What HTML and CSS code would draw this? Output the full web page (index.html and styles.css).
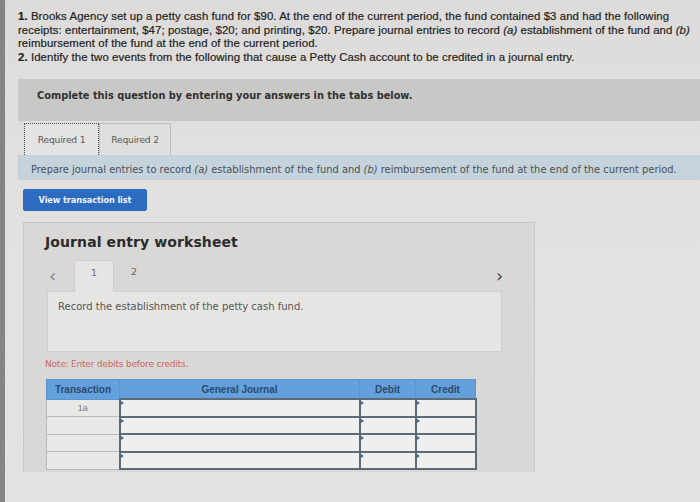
FILE: index.html
```html
<!DOCTYPE html>
<html lang="en">
<head>
<meta charset="utf-8">
<title>Petty cash fund</title>
<link rel="stylesheet" href="styles.css">
</head>
<body>
<div class="screen">
  <section class="question">
    <p><b>1.</b> Brooks Agency set up a petty cash fund for $90. At the end of the current period, the fund contained $3 and had the following<br>receipts: entertainment, $47; postage, $20; and printing, $20. Prepare journal entries to record <i>(a)</i> establishment of the fund and <i>(b)</i><br>reimbursement of the fund at the end of the current period.<br><b>2.</b> Identify the two events from the following that cause a Petty Cash account to be credited in a journal entry.</p>
  </section>

  <div class="instructions">Complete this question by entering your answers in the tabs below.</div>

  <div class="req-tabs">
    <div class="req-tab active">Required 1</div>
    <div class="req-tab">Required 2</div>
  </div>

  <div class="prompt">Prepare journal entries to record <i>(a)</i> establishment of the fund and <i>(b)</i> reimbursement of the fund at the end of the current period.</div>

  <button class="view-btn" type="button">View transaction list</button>

  <section class="worksheet">
    <h2>Journal entry worksheet</h2>
    <div class="ws-nav">
      <span class="arrow prev">&lsaquo;</span>
      <span class="ws-tab active">1</span>
      <span class="ws-tab">2</span>
      <span class="arrow next">&rsaquo;</span>
    </div>
    <div class="ws-body">Record the establishment of the petty cash fund.</div>
    <p class="note">Note: Enter debits before credits.</p>
    <table class="journal">
      <thead>
        <tr><th class="c-tr">Transaction</th><th class="c-gj">General Journal</th><th class="c-dr">Debit</th><th class="c-cr">Credit</th></tr>
      </thead>
      <tbody>
        <tr><td class="tr">1a</td><td class="in"></td><td class="in"></td><td class="in"></td></tr>
        <tr><td class="tr"></td><td class="in"></td><td class="in"></td><td class="in"></td></tr>
        <tr><td class="tr"></td><td class="in"></td><td class="in"></td><td class="in"></td></tr>
        <tr><td class="tr"></td><td class="in"></td><td class="in"></td><td class="in"></td></tr>
      </tbody>
    </table>
  </section>
</div>
</body>
</html>
```
FILE: styles.css
```css
html, body {
  margin: 0;
  padding: 0;
}

body {
  width: 700px;
  height: 502px;
  overflow: hidden;
  background: #e2e1df;
  font-family: "Liberation Sans", Arial, sans-serif;
  color: #2a2a2a;
}

.screen {
  height: 502px;
  box-sizing: border-box;
  border-left: 5px solid #858483;
  padding-left: 13px;
  background: linear-gradient(#dcdbd9 0, #dfdedc 80px, #e2e1df 200px, #e4e3e1 502px);
}

/* question text */
.question {
  height: 79px;
  box-sizing: border-box;
  padding-top: 10px;
}

.question p {
  margin: 0;
  font-size: 11.4px;
  line-height: 13.6px;
  color: #232323;
  white-space: nowrap;
  letter-spacing: 0.08px;
  -webkit-text-stroke: 0.2px #232323;
}

/* grey instruction band */
.instructions {
  height: 42px;
  box-sizing: border-box;
  background: #c8c8c7;
  padding: 11px 0 0 19px;
  font-family: "DejaVu Sans", Verdana, sans-serif;
  font-weight: bold;
  font-size: 9.8px;
  line-height: 12px;
  color: #303030;
}

/* Required tabs */
.req-tabs {
  display: flex;
  padding: 2px 0 0 6px;
  height: 34px;
  box-sizing: border-box;
}

.req-tab {
  width: 72px;
  box-sizing: border-box;
  border: 1px solid #bdbdbc;
  border-bottom: none;
  background: #dfdfde;
  font-family: "DejaVu Sans", Verdana, sans-serif;
  font-size: 9.2px;
  color: #5a5a5a;
  text-align: center;
  padding-top: 10px;
  line-height: 12px;
  letter-spacing: -0.2px;
}

.req-tab.active {
  width: 75px;
  border: 1px dotted #4d4d4d;
  border-bottom: none;
  background: #e3e3e2;
}

.prompt {
  height: 25px;
  box-sizing: border-box;
  background: #c5d3dc;
  padding: 9px 0 0 13px;
  font-family: "DejaVu Sans", Verdana, sans-serif;
  font-size: 9.9px;
  line-height: 12px;
  color: #4a4f55;
  white-space: nowrap;
}

.view-btn {
  display: block;
  margin: 9px 0 0 5px;
  width: 124px;
  height: 22px;
  border: none;
  border-radius: 2px;
  background: #2c6bc0;
  color: #eef3fb;
  font-family: "DejaVu Sans", Verdana, sans-serif;
  font-weight: bold;
  font-size: 8.2px;
  letter-spacing: -0.1px;
  padding: 0;
}

/* worksheet panel */
.worksheet {
  margin: 11px 0 0 5px;
  width: 512px;
  height: 250px;
  box-sizing: border-box;
  background: #d9d8d6;
  border: 1px solid #c9c8c6;
  border-bottom: none;
  padding: 0 32px 0 23px;
}

.worksheet h2 {
  margin: 0 0 0 -2px;
  padding: 11px 0 0 0;
  font-family: "DejaVu Sans", Verdana, sans-serif;
  font-weight: bold;
  font-size: 14px;
  line-height: 16px;
  color: #2b2b2b;
  letter-spacing: 0.1px;
}

.ws-nav {
  display: flex;
  align-items: flex-end;
  margin-top: 10px;
  height: 31px;
}

.arrow {
  width: 27px;
  align-self: center;
  font-family: "DejaVu Sans", sans-serif;
  font-size: 18px;
  line-height: 16px;
  color: #8a8a8a;
  padding-left: 2px;
  box-sizing: border-box;
}

.arrow.next {
  margin-left: auto;
  width: 12px;
  margin-right: -6px;
  color: #4a4a4a;
  padding-left: 0;
}

.ws-tab {
  width: 40px;
  height: 31px;
  box-sizing: border-box;
  text-align: center;
  font-family: "DejaVu Sans", Verdana, sans-serif;
  font-size: 9.5px;
  line-height: 23px;
  color: #6a6a6a;
}

.ws-tab.active {
  background: #e5e5e3;
  border: 1px solid #cdcdcb;
  border-bottom: none;
  height: 32px;
  margin-bottom: -1px;
  position: relative;
}

.ws-body {
  height: 61px;
  box-sizing: border-box;
  background: #e5e5e3;
  border: 1px solid #cfcfcd;
  padding: 9px 0 0 10px;
  font-family: "DejaVu Sans", Verdana, sans-serif;
  font-size: 10px;
  line-height: 12px;
  color: #565656;
}

.note {
  margin: 7px 0 0 -2px;
  font-family: "DejaVu Sans", Verdana, sans-serif;
  font-size: 9px;
  line-height: 11px;
  color: #c86663;
  letter-spacing: -0.2px;
}

/* journal grid */
.journal {
  margin: 9px 0 0 -1px;
  width: 425px;
  border-collapse: collapse;
  table-layout: fixed;
}

.journal th {
  height: 18px;
  padding: 0;
  background: #64a0dc;
  border: 1px solid #5b93cf;
  font-family: "Liberation Sans", Arial, sans-serif;
  font-weight: bold;
  font-size: 10px;
  color: #2d4a6b;
  text-align: center;
}

.c-tr { width: 72px; }
.c-gj { width: 239px; }
.c-dr { width: 55px; }
.c-cr { width: 59px; }

.journal td {
  height: 15.5px;
  padding: 0;
}

.journal td.tr {
  background: #e8e8e6;
  border: 1px solid #b9b9b8;
  font-size: 9px;
  color: #7a7a7a;
  text-align: center;
}

.journal td.in {
  position: relative;
  background: #efefed;
  border: 2px solid #5c6b79;
}

.journal td.in::before {
  content: "";
  position: absolute;
  left: 0;
  top: 1px;
  border-left: 3px solid #3f6a9c;
  border-top: 2px solid transparent;
  border-bottom: 2px solid transparent;
}
```
